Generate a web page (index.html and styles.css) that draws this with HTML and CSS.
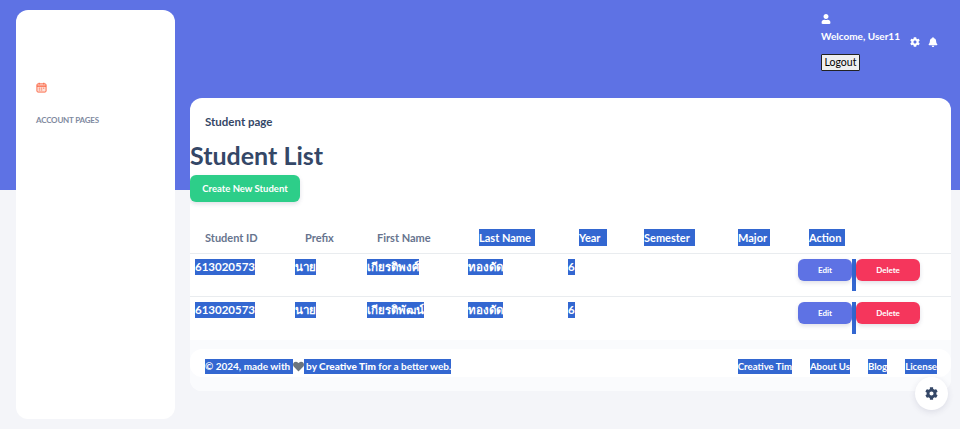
FILE: index.html
```html
<!DOCTYPE html>
<html lang="en">
<head>
<meta charset="utf-8">
<title>Student List</title>
<link rel="stylesheet" href="styles.css">
</head>
<body>
<div class="shell">
  <aside class="sidebar">
    <svg class="cal" viewBox="0 0 12 12"><rect x="1" y="2" width="10" height="9" rx="1.2" fill="#fde3dc" stroke="#fb6340"/><path d="M1 4.5h10" stroke="#fb6340" stroke-width="1.4"/><path d="M3.5 .8v2M8.500 .8v2" stroke="#fb6340"/><path d="M3 6.700h1.500M5.300 6.700h1.500M7.600 6.700h1.500M3 8.700h1.500M5.300 8.700h1.500" stroke="#fb6340" stroke-width=".9"/></svg>
    <div class="side-title">ACCOUNT PAGES</div>
  </aside>
  <main class="main">
    <header class="topbar">
      <div class="welcome">
        <svg class="ico-user" viewBox="0 0 448 512"><path fill="#fff" d="M224 256c70.7 0 128-57.3 128-128S294.700 0 224 0 96 57.300 96 128s57.300 128 128 128zm89.600 32h-16.700c-22.200 10.200-46.900 16-72.900 16s-50.600-5.800-72.900-16h-16.700C60.200 288 0 348.200 0 422.400V464c0 26.500 21.500 48 48 48h352c26.500 0 48-21.500 48-48v-41.600c0-74.200-60.200-134.400-134.400-134.400z"/></svg>
        <div class="welcome-text">Welcome, User11</div>
        <button class="logout">Logout</button>
      </div>
      <svg class="ico-top" viewBox="0 0 512 512"><path fill="#fff" d="M487.400 315.700l-42.600-24.600c4.300-23.200 4.300-47 0-70.200l42.600-24.600c4.900-2.800 7.100-8.600 5.500-14-11.100-35.600-30-67.800-54.700-94.600-3.800-4.100-10-5.100-14.800-2.300L380.800 110c-17.900-15.400-38.500-27.300-60.800-35.100V25.800c0-5.600-3.900-10.500-9.400-11.700-36.700-8.200-74.300-7.800-109.200 0-5.500 1.200-9.400 6.100-9.400 11.700V75c-22.200 7.900-42.800 19.800-60.800 35.100L88.700 85.500c-4.900-2.800-11-1.900-14.800 2.300-24.700 26.700-43.600 58.900-54.700 94.600-1.700 5.400.6 11.200 5.500 14L67.300 221c-4.300 23.200-4.300 47 0 70.200l-42.600 24.600c-4.900 2.800-7.100 8.600-5.500 14 11.100 35.600 30 67.800 54.700 94.600 3.800 4.100 10 5.100 14.800 2.300l42.600-24.600c17.900 15.400 38.500 27.300 60.800 35.100v49.200c0 5.600 3.900 10.500 9.400 11.700 36.700 8.200 74.300 7.800 109.200 0 5.500-1.200 9.400-6.100 9.400-11.700v-49.200c22.200-7.900 42.800-19.800 60.800-35.100l42.600 24.600c4.900 2.800 11 1.900 14.800-2.300 24.700-26.700 43.600-58.900 54.700-94.600 1.500-5.500-.7-11.300-5.600-14.100zM256 336c-44.100 0-80-35.900-80-80s35.900-80 80-80 80 35.900 80 80-35.900 80-80 80z"/></svg>
      <svg class="ico-top" viewBox="0 0 448 512"><path fill="#fff" d="M224 512c35.320 0 63.970-28.650 63.970-64H160.030c0 35.350 28.650 64 63.970 64zm215.390-149.710c-19.320-20.760-55.470-51.990-55.470-154.290 0-77.700-54.480-139.900-127.940-155.160V32c0-17.670-14.320-32-31.980-32s-31.980 14.330-31.980 32v20.840C118.560 68.100 64.080 130.300 64.080 208c0 102.300-36.150 133.530-55.470 154.290-6 6.450-8.660 14.160-8.610 21.710.11 16.400 12.980 32 32.100 32h383.800c19.120 0 32-15.600 32.100-32 .05-7.550-2.610-15.270-8.610-21.710z"/></svg>
    </header>
    <section class="card">
      <h6 class="page-title">Student page</h6>
      <h2 class="list-title">Student List</h2>
      <a class="btn btn-create">Create New Student</a>
      <div class="row head">
        <div class="th">Student ID</div>
        <div class="th">Prefix</div>
        <div class="th">First Name</div>
        <div class="th"><span class="sel box w-last">Last Name</span></div>
        <div class="th"><span class="sel box w-year">Year</span></div>
        <div class="th"><span class="sel box w-sem">Semester</span></div>
        <div class="th"><span class="sel box w-major">Major</span></div>
        <div class="th"><span class="sel box w-action">Action</span></div>
      </div>
      <div class="row body">
        <div class="td"><span class="sel box">613020573</span></div>
        <div class="td"><span class="sel box">นาย</span></div>
        <div class="td"><span class="sel box">เกียรติพงศ์</span></div>
        <div class="td"><span class="sel box">ทองดัด</span></div>
        <div class="td"><span class="sel box">6</span></div>
        <div class="td"></div>
        <div class="td"></div>
        <div class="td actions"><a class="btn btn-edit">Edit</a><span class="sel-bar"></span><a class="btn btn-del">Delete</a></div>
      </div>
      <div class="row body last">
        <div class="td"><span class="sel box">613020573</span></div>
        <div class="td"><span class="sel box">นาย</span></div>
        <div class="td"><span class="sel box">เกียรติพัฒน์</span></div>
        <div class="td"><span class="sel box">ทองดัด</span></div>
        <div class="td"><span class="sel box">6</span></div>
        <div class="td"></div>
        <div class="td"></div>
        <div class="td actions"><a class="btn btn-edit">Edit</a><span class="sel-bar"></span><a class="btn btn-del">Delete</a></div>
      </div>
      <div class="card-foot">
        <footer class="footer">
          <div class="copy"><span class="sel">© 2024, made with </span><svg class="heart" viewBox="0 0 512 512"><path fill="#6c757d" d="M462.300 62.600C407.500 15.900 326 24.300 275.700 76.200L256 96.500l-19.700-20.300C186.100 24.300 104.500 15.900 49.700 62.600c-62.800 53.600-66.100 149.800-9.900 207.900l193.500 199.800c12.500 12.900 32.800 12.900 45.300 0l193.500-199.800c56.300-58.100 53-154.300-9.800-207.900z"/></svg><span class="sel"> by <b>Creative Tim</b> for a better web.</span></div>
          <nav class="links"><span class="sel">Creative Tim</span><span class="sel">About Us</span><span class="sel">Blog</span><span class="sel">License</span></nav>
        </footer>
      </div>
    </section>
  </main>
</div>
<div class="fab"><svg viewBox="0 0 512 512"><path fill="#344767" d="M487.400 315.700l-42.600-24.600c4.300-23.200 4.300-47 0-70.200l42.600-24.600c4.900-2.800 7.100-8.600 5.500-14-11.100-35.600-30-67.800-54.700-94.600-3.800-4.100-10-5.100-14.800-2.300L380.800 110c-17.900-15.400-38.500-27.300-60.800-35.100V25.800c0-5.600-3.900-10.500-9.400-11.700-36.700-8.200-74.300-7.800-109.200 0-5.500 1.200-9.400 6.100-9.400 11.700V75c-22.200 7.900-42.800 19.800-60.800 35.100L88.700 85.500c-4.900-2.800-11-1.900-14.800 2.300-24.700 26.700-43.600 58.900-54.700 94.600-1.700 5.400.6 11.200 5.500 14L67.300 221c-4.300 23.200-4.300 47 0 70.200l-42.600 24.600c-4.900 2.800-7.100 8.600-5.500 14 11.100 35.600 30 67.800 54.700 94.600 3.800 4.100 10 5.100 14.800 2.300l42.600-24.600c17.900 15.400 38.500 27.300 60.800 35.100v49.200c0 5.600 3.900 10.500 9.400 11.700 36.700 8.200 74.300 7.800 109.200 0 5.500-1.200 9.400-6.100 9.400-11.700v-49.200c22.200-7.900 42.800-19.800 60.800-35.100l42.600 24.600c4.900 2.800 11 1.900 14.800-2.300 24.700-26.700 43.600-58.900 54.700-94.600 1.500-5.500-.7-11.300-5.600-14.100zM256 336c-44.100 0-80-35.900-80-80s35.900-80 80-80 80 35.900 80 80-35.900 80-80 80z"/></svg></div>
</body>
</html>
```
FILE: styles.css
```css
* { box-sizing: border-box; }
html, body { margin: 0; height: 429px; overflow: hidden; }
body {
  background: linear-gradient(#5e72e4 0, #5e72e4 190px, #f4f5f9 190px);
  font-family: Lato, "Noto Sans", sans-serif;
  color: #344767;
}
.shell { display: flex; gap: 15px; padding: 10px 9px 0 16px; }
.sidebar {
  width: 159px; height: 409px; background: #fff; border-radius: 12px;
  padding: 72px 20px 0; flex: none;
}
.cal { display: block; width: 11px; height: 11px; }
.side-title { margin-top: 21px; font-size: 8px; line-height: 12px; font-weight: 700; letter-spacing: -.2px; color: #7f8a9f; }
.main { width: 761px; flex: none; }
.topbar { height: 88px; display: flex; align-items: flex-start; justify-content: flex-end; padding: 4px 13px 0 0; }
.welcome { width: 89px; color: #fff; }
.ico-user { display: block; width: 10px; height: 10px; }
.welcome-text { margin-top: 5px; font-size: 10px; line-height: 14px; font-weight: 700; white-space: nowrap; }
.logout {
  display: block; margin-top: 11px; width: 39px; height: 17px; padding: 0;
  font: 10.500px/1 Lato, "Noto Sans", sans-serif; color: #000; background: #efefef;
  border: 1px solid #222; border-radius: 1px;
}
.ico-top { width: 10px; height: 10px; margin: 23px 0 0; }
.ico-top + .ico-top { margin-left: 8px; }
.card { height: 293px; background: #fff; border-radius: 12px; display: flex; flex-direction: column; overflow: hidden; }
.page-title { margin: 16px 0 0 15px; font-size: 11.500px; line-height: 16px; font-weight: 700; color: #344767; }
.list-title { margin: 9px 0 0; font-size: 25px; line-height: 32px; font-weight: 700; color: #344767; }
.btn { display: flex; align-items: center; justify-content: center; color: #fff; font-weight: 700; border-radius: 6px; box-shadow: 0 2px 4px rgba(50,50,93,.15); }
.btn-create { margin-top: 4px; width: 110px; height: 27px; background: #2dce89; font-size: 9.500px; }
.row { display: grid; grid-template-columns: 100px 72px 101px 100px 65px 94px 71px 1fr; }
.head { margin-top: 27px; height: 25px; border-bottom: 1px solid #e9ecef; }
.th { padding-left: 15px; font-size: 11px; line-height: 17px; font-weight: 700; color: #67748e; }
.th .box { margin-left: 1px; }
.body { height: 43px; border-bottom: 1px solid #e9ecef; }
.last { border-bottom: 0; }
.td { padding: 5px 0 0 5px; font-size: 11.500px; line-height: 16px; font-weight: 700; white-space: nowrap; }
.sel { background: #3367d1; color: #fff; }
.box { display: inline-block; }
.w-last { width: 56px; }
.w-year { width: 28px; }
.w-sem { width: 51px; }
.w-major { width: 32px; }
.w-action { width: 36px; }
.actions { display: flex; align-items: flex-start; }
.btn-edit { width: 54px; height: 22px; background: #5e72e4; font-size: 8px; }
.btn-del { width: 64px; height: 22px; background: #f5365c; font-size: 8px; }
.sel-bar { width: 4px; height: 32px; background: #3367d1; }
.card-foot { flex: 1; background: #fafbfd; padding-top: 9px; }
.footer { height: 28px; background: #fff; border-radius: 12px; display: flex; justify-content: space-between; align-items: flex-start; padding: 10px 14px 0 15px; font-size: 10px; line-height: 15px; font-weight: 700; }
.copy { white-space: pre; display: flex; }
.heart { width: 11px; height: 15px; }
.links { display: flex; gap: 18px; font-size: 9.600px; }
.fab {
  position: fixed; left: 915px; top: 377px; width: 33px; height: 33px; border-radius: 50%;
  background: #fff; box-shadow: 0 2px 6px rgba(50,50,93,.12);
  display: flex; align-items: center; justify-content: center;
}
.fab svg { width: 13px; height: 13px; }
```
